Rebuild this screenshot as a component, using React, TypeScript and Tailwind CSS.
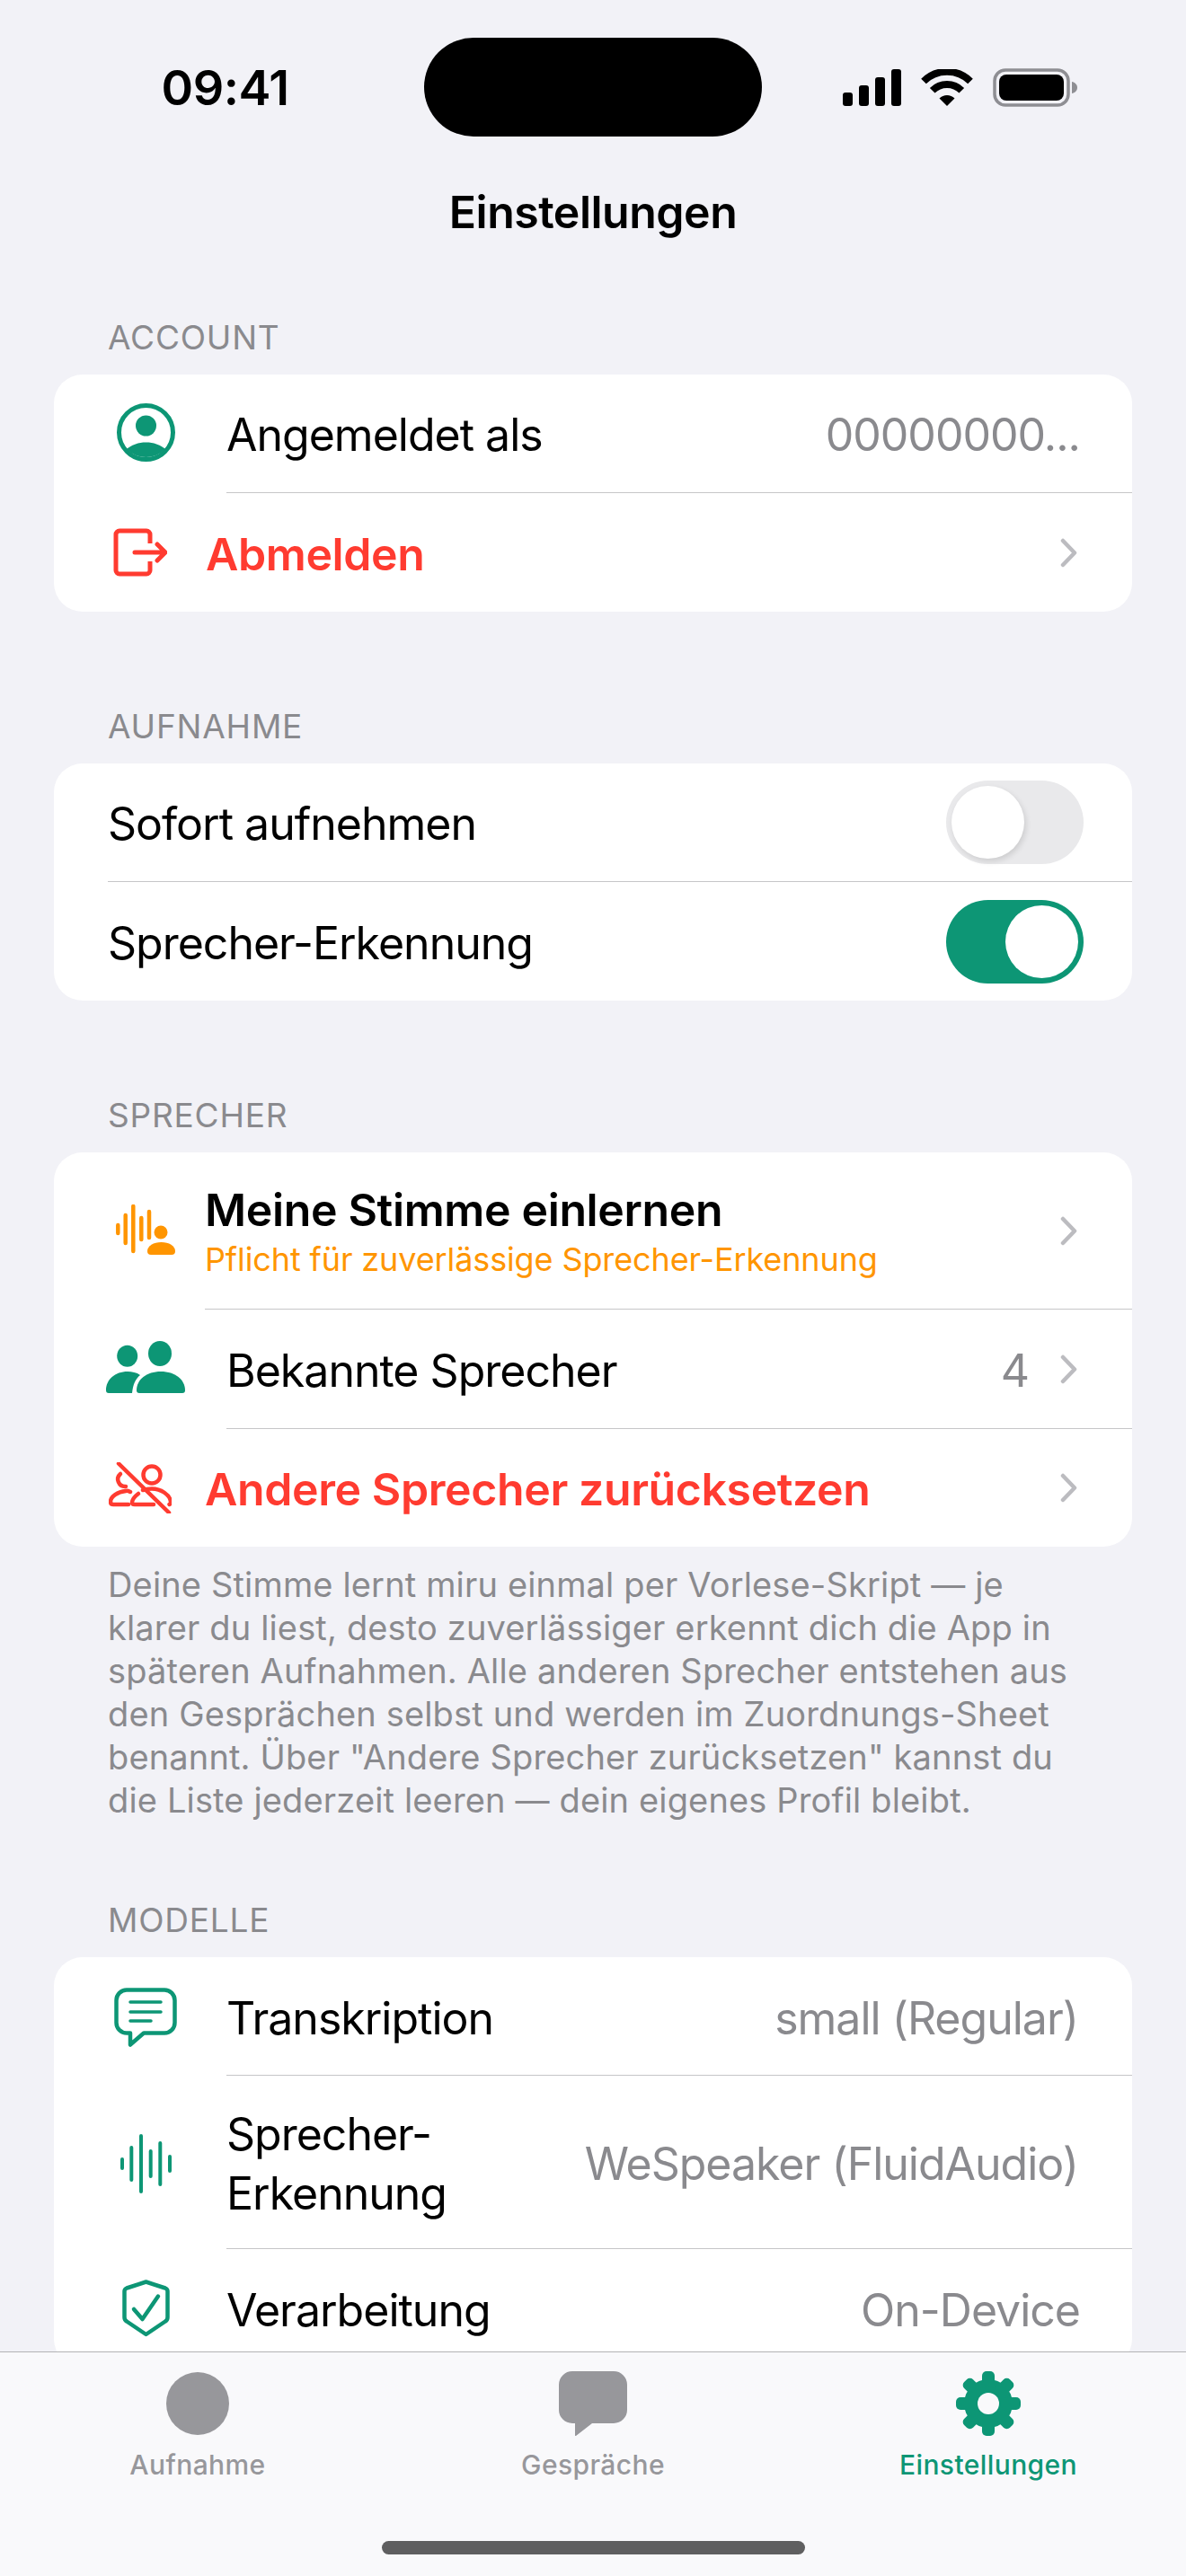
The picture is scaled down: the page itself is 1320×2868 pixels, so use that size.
import React from 'react';

const GREEN = '#0d9675';

const Chevron = () => (
  <svg width="20" height="33" viewBox="0 0 20 33" fill="none" className="shrink-0">
    <path d="M3 3l13 13.5L3 30" stroke="#bcbcc0" strokeWidth="4.5" strokeLinecap="round" strokeLinejoin="round" />
  </svg>
);

const SignalIcon = () => (
  <svg width="65" height="41" viewBox="0 0 65 41" fill="#000">
    <rect x="0" y="26" width="11" height="15" rx="3" />
    <rect x="18" y="18" width="11" height="23" rx="3" />
    <rect x="36" y="9" width="11" height="32" rx="3" />
    <rect x="54" y="0" width="11" height="41" rx="3" />
  </svg>
);

const WifiIcon = () => (
  <svg width="58" height="41" viewBox="0 0 58 41" fill="none" stroke="#000" strokeWidth="8">
    <path d="M3 13.5a37 37 0 0 1 52 0" />
    <path d="M12.7 23.7a23 23 0 0 1 32.6 0" />
    <path d="M20.5 32.5a12 12 0 0 1 17 0L29 41z" fill="#000" stroke="none" />
  </svg>
);

const BatteryIcon = () => (
  <svg width="94" height="43" viewBox="0 0 94 43">
    <rect x="2" y="2" width="82" height="39" rx="12" fill="none" stroke="#8e8e93" strokeWidth="3.5" />
    <rect x="7" y="7" width="72" height="29" rx="8" fill="#000" />
    <path d="M88 15c3 .5 6 3 6 6.500s-3 6-6 6.500z" fill="#8e8e93" />
  </svg>
);

const PersonCircleIcon = () => (
  <svg width="65" height="65" viewBox="0 0 65 65" fill={GREEN}>
    <circle cx="32.500" cy="32.500" r="30" fill="none" stroke={GREEN} strokeWidth="5" />
    <circle cx="32.500" cy="25" r="11.500" />
    <path d="M11 51c6-5 13-7.500 21.500-7.500S48 46 54 51a30 30 0 0 1-43 0z" />
  </svg>
);

const LogoutIcon = () => (
  <svg width="60" height="54" viewBox="0 0 60 54" fill="none" stroke="#ff3b30" strokeWidth="5" strokeLinecap="round" strokeLinejoin="round">
    <path d="M41 17V7a4 4 0 0 0-4-4H7a4 4 0 0 0-4 4v40a4 4 0 0 0 4 4h30a4 4 0 0 0 4-4V37" strokeLinecap="butt" />
    <path d="M24 27h33M49 18l9 9-9 9" />
  </svg>
);

const WavePersonIcon = () => (
  <svg width="66" height="56" viewBox="0 0 66 56" fill="#ff9500">
    <g stroke="#ff9500" strokeWidth="4.500" strokeLinecap="round">
      <path d="M2.300 23v9M10.700 12v31M19.300 2v50M28.300 15v24M37 8v29" />
    </g>
    <circle cx="50" cy="31" r="7.500" />
    <path d="M35 52c0-6 7-10 15.500-10S66 46 66 52q0 4-4 4H39q-4 0-4-4z" />
  </svg>
);

const PeopleIcon = () => (
  <svg width="88" height="58" viewBox="0 0 88 58" fill={GREEN}>
    <ellipse cx="23.700" cy="16.700" rx="11.500" ry="12" />
    <ellipse cx="60" cy="14" rx="13" ry="14" />
    <path d="M34 55c0-12 11-21 27-21s27 9 27 21q0 3-3 3H37q-3 0-3-3z" />
    <path d="M0 55c0-12 10-21 24-21 5 0 10 1 14 4-5 4-8 10-9 20H3q-3 0-3-3z" />
  </svg>
);

const PeopleSlashIcon = () => (
  <svg width="70" height="57" viewBox="0 0 70 57" fill="none" stroke="#ff3b30" strokeWidth="4.500" strokeLinecap="round" strokeLinejoin="round">
    <path d="M11 1.500l56 54.500" />
    <circle cx="48" cy="14" r="9.500" />
    <path d="M13 13a8 8 0 0 0 6 14" />
    <path d="M24 33c-2-1-4-1.500-5-1-9 1-17 6-17 12q0 3 3 3h17" />
    <path d="M33 35c-4 3-7 6-7 10q0 2 3 2h21" />
    <path d="M38 31c3-1 6-1.500 10-1.500 10 0 20 6.500 21 14.500.3 2-1.500 3-1.500 3" />
  </svg>
);

const BubbleIcon = () => (
  <svg width="70" height="66" viewBox="0 0 70 66" fill="none" stroke={GREEN} strokeLinecap="round" strokeLinejoin="round">
    <path d="M14 2.500h42a11.500 11.500 0 0 1 11.500 11.500v25a11.500 11.500 0 0 1-11.500 11.500H33L18 63.500V50.500h-4A11.500 11.500 0 0 1 2.500 39V14A11.500 11.500 0 0 1 14 2.500z" strokeWidth="4.500" />
    <path d="M18 16h34M18 27h34M18 37h23" strokeWidth="3.500" />
  </svg>
);

const WaveIcon = () => (
  <svg width="57" height="66" viewBox="0 0 57 66" fill="none" stroke={GREEN} strokeWidth="4" strokeLinecap="round">
    <path d="M2 28v10M12.300 15v36M23 2v62M33.700 19v28M44.300 10v46M55 25v16" />
  </svg>
);

const ShieldIcon = () => (
  <svg width="53" height="64" viewBox="0 0 53 64" fill="none" stroke={GREEN} strokeLinecap="round" strokeLinejoin="round">
    <path d="M26.500 2.500 48 9.500q2.500 1 2.500 3.500v29q0 3-2.500 4.500L26.500 61 5 46.500Q2.500 45 2.500 42V13q0-2.500 2.500-3.500z" strokeWidth="4.500" />
    <path d="M13 33l9.500 11L40 18.500" strokeWidth="4.500" />
  </svg>
);

const TabCircleIcon = () => (
  <svg width="70" height="70" viewBox="0 0 70 70" fill="#97979b">
    <circle cx="35" cy="35" r="35" />
  </svg>
);

const TabBubbleIcon = () => (
  <svg width="76" height="72" viewBox="0 0 76 72" fill="#97979b">
    <path d="M15 0h46a15 15 0 0 1 15 15v28a15 15 0 0 1-15 15H37L19 72q-1 .5-1-1V58h-3A15 15 0 0 1 0 43V15A15 15 0 0 1 15 0z" />
  </svg>
);

const GearIcon = () => (
  <svg width="72" height="72" viewBox="0 0 72 72" fill={GREEN}>
    <circle cx="36" cy="36" r="27" />
    <rect x="29" y="0" width="14" height="72" rx="5" />
    <rect x="29" y="0" width="14" height="72" rx="5" transform="rotate(45 36 36)" />
    <rect x="29" y="0" width="14" height="72" rx="5" transform="rotate(90 36 36)" />
    <rect x="29" y="0" width="14" height="72" rx="5" transform="rotate(135 36 36)" />
    <circle cx="36" cy="36" r="12" fill="#f9f9fb" />
  </svg>
);

const Divider = ({ inset }: { inset: string }) => (
  <div className={`h-px bg-[#c6c6c8] ${inset}`} />
);

const SectionLabel = ({ children }: { children: React.ReactNode }) => (
  <div className="pl-[120px] h-[42px] text-[37px] leading-[44px] text-[#8a8a8e] uppercase tracking-[0.8px]">
    {children}
  </div>
);

const Card = ({ children }: { children: React.ReactNode }) => (
  <div className="mx-[60px] bg-white rounded-[32px] overflow-hidden">{children}</div>
);

const IconSlot = ({ children, className }: { children: React.ReactNode; className: string }) => (
  <div className={`shrink-0 flex items-center justify-center ${className}`}>{children}</div>
);

const Toggle = ({ on }: { on: boolean }) => (
  <div className={`w-[153px] h-[93px] rounded-full p-[6px] flex ${on ? 'bg-[#0d9675] justify-end' : 'bg-[#e9e9eb] justify-start'}`}>
    <div className={`w-[81px] h-[81px] rounded-full bg-white ${on ? '' : 'shadow-[2px_3px_6px_rgba(0,0,0,0.12)]'}`} />
  </div>
);

const App: React.FC = () => {
  return (
    <div className="relative w-[1320px] h-[2868px] overflow-hidden bg-[#f2f2f7] text-black font-['Inter',sans-serif]">
      {/* status bar */}
      <div className="h-[194px] pt-[42px] pl-[179px] pr-[121px] flex items-start">
        <div className="w-[143px] h-[110px] flex items-center justify-center text-[54px] font-semibold tracking-[-0.5px]">09:41</div>
        <div className="ml-[150px] w-[376px] h-[110px] bg-black rounded-[55px]" />
        <div className="ml-auto h-[110px] flex items-center gap-[22px]">
          <SignalIcon />
          <WifiIcon />
          <BatteryIcon />
        </div>
      </div>

      <div className="h-[84px] flex items-center justify-center text-[50px] font-semibold tracking-[-0.5px]">Einstellungen</div>

      <div className="pt-[76px]">
        <SectionLabel>Account</SectionLabel>
        <div className="h-[21px]" />
        <Card>
          <div className="h-[131px] flex items-center">
            <IconSlot className="w-[192px] pl-[13px] pb-[3px]"><PersonCircleIcon /></IconSlot>
            <span className="pt-[4px] text-[50px] tracking-[-1px]">Angemeldet als</span>
            <span className="ml-auto pt-[4px] pr-[58px] text-[50px] tracking-[-1px] text-[#8a8a8e]">00000000...</span>
          </div>
          <Divider inset="ml-[192px]" />
          <div className="h-[132px] flex items-center">
            <IconSlot className="w-[169px] pl-[22px]"><LogoutIcon /></IconSlot>
            <span className="pt-[4px] text-[50px] font-semibold tracking-[-0.4px] text-[#ff3b30]">Abmelden</span>
            <span className="ml-auto pr-[60px] flex"><Chevron /></span>
          </div>
        </Card>
      </div>

      <div className="pt-[106px]">
        <SectionLabel>Aufnahme</SectionLabel>
        <div className="h-[21px]" />
        <Card>
          <div className="h-[131px] flex items-center pl-[60px] pr-[54px] justify-between">
            <span className="pt-[4px] text-[50px] tracking-[-1px]">Sofort aufnehmen</span>
            <Toggle on={false} />
          </div>
          <Divider inset="ml-[60px]" />
          <div className="h-[132px] flex items-center pl-[60px] pr-[54px] justify-between">
            <span className="pt-[4px] text-[50px] tracking-[-1px]">Sprecher-Erkennung</span>
            <Toggle on />
          </div>
        </Card>
      </div>

      <div className="pt-[106px]">
        <SectionLabel>Sprecher</SectionLabel>
        <div className="h-[21px]" />
        <Card>
          <div className="h-[174px] flex items-center">
            <IconSlot className="w-[168px] pl-[36px] pb-[2px]"><WavePersonIcon /></IconSlot>
            <div className="flex flex-col">
              <span className="text-[50px] leading-[62px] font-semibold tracking-[-0.35px]">Meine Stimme einlernen</span>
              <span className="mt-[2px] text-[36px] leading-[44px] tracking-[-0.12px] text-[#ff9500]">Pflicht für zuverlässige Sprecher-Erkennung</span>
            </div>
            <span className="ml-auto pr-[60px] flex"><Chevron /></span>
          </div>
          <Divider inset="ml-[168px]" />
          <div className="h-[132px] flex items-center">
            <IconSlot className="w-[192px] pl-[12px] pb-[4px]"><PeopleIcon /></IconSlot>
            <span className="pt-[4px] text-[50px] tracking-[-1px]">Bekannte Sprecher</span>
            <span className="ml-auto pt-[4px] text-[50px] text-[#8a8a8e] pr-[34px]">4</span>
            <span className="pr-[60px] flex"><Chevron /></span>
          </div>
          <Divider inset="ml-[192px]" />
          <div className="h-[131px] flex items-center">
            <IconSlot className="w-[168px] pl-[24px]"><PeopleSlashIcon /></IconSlot>
            <span className="pt-[4px] text-[50px] font-semibold tracking-[-0.4px] text-[#ff3b30]">Andere Sprecher zurücksetzen</span>
            <span className="ml-auto pr-[60px] flex"><Chevron /></span>
          </div>
        </Card>
        <p className="mt-[18px] pl-[120px] pr-[40px] text-[38px] leading-[48px] tracking-[0.15px] text-[#8a8a8e]">
          Deine Stimme lernt miru einmal per Vorlese-Skript — je<br />
          klarer du liest, desto zuverlässiger erkennt dich die App in<br />
          späteren Aufnahmen. Alle anderen Sprecher entstehen aus<br />
          den Gesprächen selbst und werden im Zuordnungs-Sheet<br />
          benannt. Über "Andere Sprecher zurücksetzen" kannst du<br />
          die Liste jederzeit leeren — dein eigenes Profil bleibt.
        </p>
      </div>

      <div className="pt-[88px]">
        <SectionLabel>Modelle</SectionLabel>
        <div className="h-[21px]" />
        <Card>
          <div className="h-[131px] flex items-center">
            <IconSlot className="w-[192px] pl-[12px] pt-[3px]"><BubbleIcon /></IconSlot>
            <span className="pt-[6px] text-[50px] tracking-[-1px]">Transkription</span>
            <span className="ml-auto pt-[6px] pr-[60px] text-[50px] tracking-[-1px] text-[#8a8a8e]">small (Regular)</span>
          </div>
          <Divider inset="ml-[192px]" />
          <div className="h-[192px] flex items-center">
            <IconSlot className="w-[192px] pl-[12px] pt-[4px]"><WaveIcon /></IconSlot>
            <span className="pt-[4px] text-[50px] leading-[66px] tracking-[-1px]">Sprecher-<br />Erkennung</span>
            <span className="ml-auto pt-[4px] pr-[60px] text-[50px] tracking-[-1px] text-[#8a8a8e]">WeSpeaker (FluidAudio)</span>
          </div>
          <Divider inset="ml-[192px]" />
          <div className="h-[132px] flex items-center">
            <IconSlot className="w-[192px] pl-[12px]"><ShieldIcon /></IconSlot>
            <span className="pt-[4px] text-[50px] tracking-[-1px]">Verarbeitung</span>
            <span className="ml-auto pt-[4px] pr-[58px] text-[50px] tracking-[-1px] text-[#8a8a8e]">On-Device</span>
          </div>
        </Card>
      </div>

      {/* tab bar */}
      <div className="absolute left-0 right-0 bottom-0 h-[250px] bg-[#f9f9fb] border-t border-[#b3b3b5]">
        <div className="flex pt-[20px]">
          <div className="flex-1 flex flex-col items-center">
            <div className="h-[74px] flex items-center"><TabCircleIcon /></div>
            <span className="mt-[13px] text-[30px] leading-[36px] font-medium tracking-[0.4px] text-[#97979b]">Aufnahme</span>
          </div>
          <div className="flex-1 flex flex-col items-center">
            <div className="h-[74px] flex items-center"><TabBubbleIcon /></div>
            <span className="mt-[13px] text-[30px] leading-[36px] font-medium tracking-[0.4px] text-[#97979b]">Gespräche</span>
          </div>
          <div className="flex-1 flex flex-col items-center">
            <div className="h-[74px] flex items-center"><GearIcon /></div>
            <span className="mt-[13px] text-[30px] leading-[36px] font-medium tracking-[0.4px] text-[#0d9675]">Einstellungen</span>
          </div>
        </div>
        <div className="absolute left-[425px] bottom-[24px] w-[471px] h-[15px] rounded-full bg-[#5f5f60]" />
      </div>
    </div>
  );
};

export default App;
